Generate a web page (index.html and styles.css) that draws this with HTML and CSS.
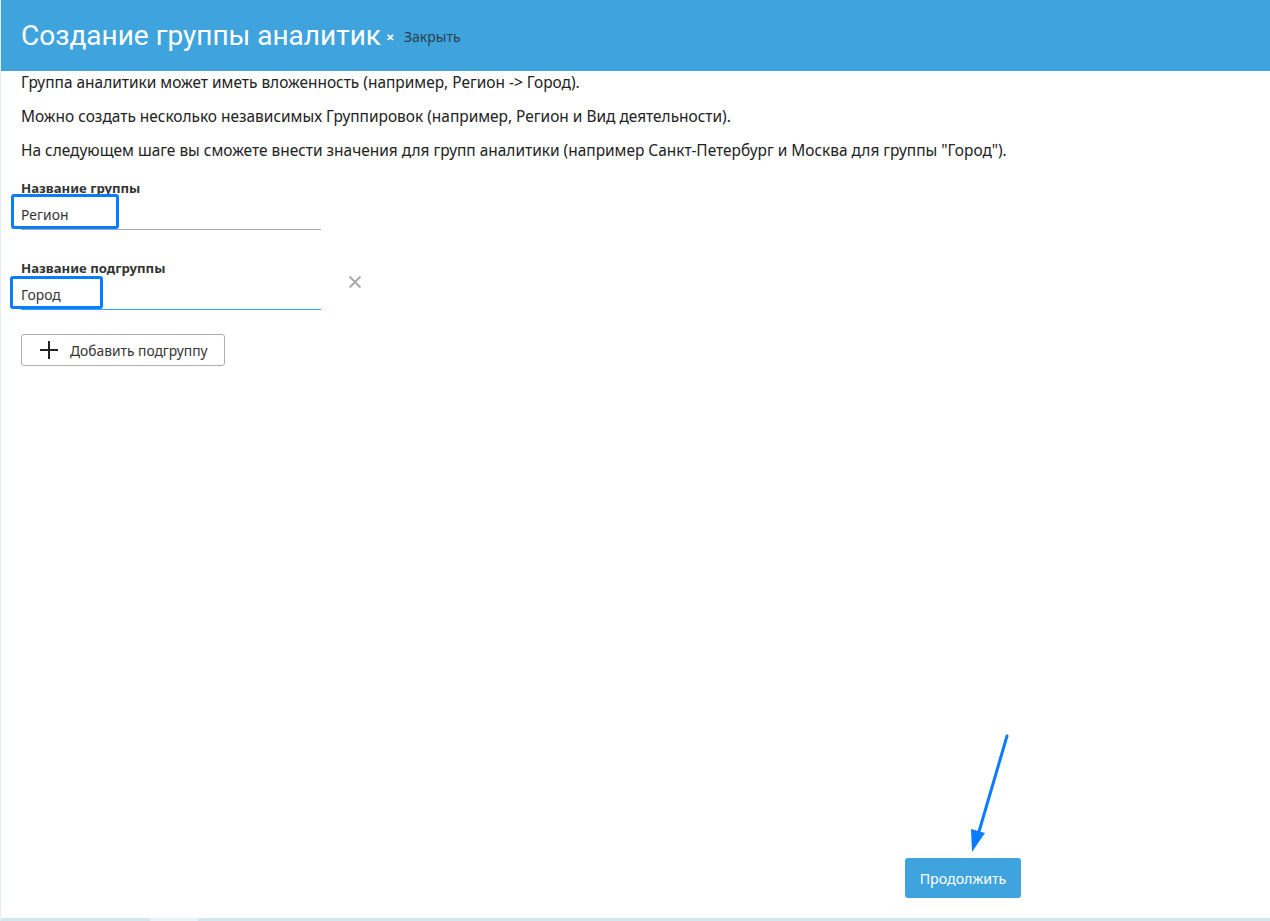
FILE: index.html
```html
<!DOCTYPE html>
<html lang="ru">
<head>
<meta charset="utf-8">
<title>Создание группы аналитик</title>
<link rel="stylesheet" href="styles.css">
</head>
<body>
<div class="page">
  <header class="header">
    <h1 class="title">Создание группы аналитик</h1>
    <span class="close-x">&#x2715;</span>
    <a class="close-link">Закрыть</a>
  </header>
  <main class="content">
    <p class="info">Группа аналитики может иметь вложенность (например, Регион -&gt; Город).</p>
    <p class="info">Можно создать несколько независимых Группировок (например, Регион и Вид деятельности).</p>
    <p class="info">На следующем шаге вы сможете внести значения для групп аналитики (например Санкт-Петербург и Москва для группы "Город").</p>

    <div class="field">
      <label class="label">Название группы</label>
      <div class="row">
        <div class="input">
          <span class="value">Регион</span>
          <span class="mark mark-1"></span>
        </div>
      </div>
    </div>

    <div class="field field-2">
      <label class="label">Название подгруппы</label>
      <div class="row">
        <div class="input focused">
          <span class="value">Город</span>
          <span class="mark mark-2"></span>
        </div>
        <span class="remove">
          <svg width="14" height="14" viewBox="0 0 14 14"><path d="M1.5 1.5 L12.5 12.5 M12.5 1.5 L1.5 12.5" stroke="#a8a8a8" stroke-width="1.8" fill="none"/></svg>
        </span>
      </div>
    </div>

    <button class="add-btn">
      <svg width="20" height="20" viewBox="0 0 20 20"><path d="M10 1 V19 M1 10 H19" stroke="#222" stroke-width="2" fill="none"/></svg>
      <span>Добавить подгруппу</span>
    </button>
  </main>
  <footer class="footer">
    <button class="continue">Продолжить</button>
  </footer>
  <div class="bottom-bar"><span class="seg"></span></div>
  <svg class="arrow" width="60" height="140" viewBox="0 0 60 140">
    <line x1="45" y1="5" x2="16" y2="104" stroke="#0a7cff" stroke-width="3" stroke-linecap="round"/>
    <polygon points="9,98 23,102 10,121" fill="#0a7cff"/>
  </svg>
</div>
</body>
</html>
```
FILE: styles.css
```css
* { box-sizing: border-box; }
html, body { margin: 0; padding: 0; }
body {
  font-family: "Noto Sans", "Open Sans", sans-serif;
  color: #222;
  background: #fff;
}
.page {
  position: relative;
  height: 921px;
  display: flex;
  flex-direction: column;
  border-left: 1px solid #e6edf1;
}
.header {
  height: 71px;
  background: #3fa4de;
  display: flex;
  align-items: center;
  padding-left: 20px;
  flex-shrink: 0;
}
.title {
  margin: 0;
  font-family: Roboto, "Noto Sans", sans-serif;
  font-size: 28px;
  font-weight: 400;
  color: #fff;
}
.close-x {
  color: #fff;
  font-size: 10px;
  font-weight: 700;
  margin-left: 5px;
  margin-top: 2px;
}
.close-link {
  color: #2d3e4a;
  font-size: 14px;
  margin-left: 10px;
  margin-top: 2px;
}
.content {
  flex: 1;
  padding: 0 20px;
}
.info {
  font-size: 15.45px;
  margin: 0;
  line-height: 20px;
  padding-top: 1px;
  margin-bottom: 13px;
}
.field { margin-top: 20px; }
.field-2 { margin-top: 30px; }
.label {
  display: block;
  font-size: 13.2px;
  font-weight: 700;
  color: #333;
  line-height: 16px;
}
.row {
  display: flex;
  align-items: center;
}
.input {
  position: relative;
  width: 300px;
  height: 30px;
  border-bottom: 1px solid #aaa;
  display: flex;
  align-items: center;
  margin-top: 4px;
}
.input.focused { border-bottom-color: #2ea6e8; }
.value {
  font-size: 13.9px;
  color: #333;
}
.mark {
  position: absolute;
  border: 3px solid #0a7cff;
  border-radius: 3px;
}
.mark-1 { left: -10px; top: -6px; width: 108px; height: 35px; }
.mark-2 { left: -11px; top: -4px; width: 93px; height: 33px; }
.remove {
  margin-left: 27px;
  margin-top: -22px;
  display: flex;
}
.add-btn {
  margin-top: 24px;
  height: 32px;
  width: 204px;
  border: 1px solid #adadad;
  border-radius: 3px;
  background: #fff;
  display: flex;
  align-items: center;
  padding: 0 0 0 17px;
  font-family: inherit;
  font-size: 13.8px;
  color: #333;
  gap: 11px;
  cursor: pointer;
}
.footer {
  display: flex;
  justify-content: flex-end;
  padding-right: 249px;
  padding-bottom: 20px;
}
.continue {
  width: 116px;
  height: 40px;
  background: #3fa4de;
  color: #fff;
  border: none;
  border-radius: 3px;
  font-family: inherit;
  font-size: 14.2px;
}
.bottom-bar {
  height: 3px;
  background: #d2e6f0;
  position: relative;
  flex-shrink: 0;
}
.seg {
  position: absolute;
  left: 149px;
  width: 48px;
  height: 3px;
  background: #e8f3f8;
}
.arrow {
  position: absolute;
  left: 961px;
  top: 731px;
}
```
